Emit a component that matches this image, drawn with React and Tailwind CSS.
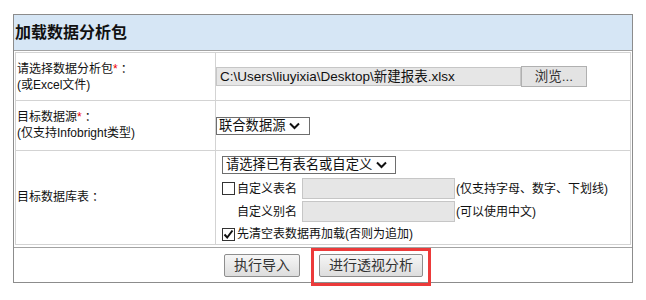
const font = "font-['Liberation_Sans','Noto_Sans_CJK_SC',sans-serif]";

function Chevron() {
  return (
    <svg width="11" height="8" viewBox="0 0 11 8" className="shrink-0 ml-[4px]">
      <path d="M1 1.5 L5.5 6 L10 1.5" fill="none" stroke="#111" strokeWidth="2" />
    </svg>
  );
}

function Checkbox({ checked }) {
  return (
    <span className="w-[13px] h-[13px] border border-[#333] bg-white flex items-center justify-center shrink-0">
      {checked && (
        <svg width="11" height="11" viewBox="0 0 11 11">
          <path d="M1.5 5.5 L4.2 8.5 L9.5 1.5" fill="none" stroke="#111" strokeWidth="2" />
        </svg>
      )}
    </span>
  );
}

function Btn({ children }) {
  return (
    <div className="h-[23px] px-[9px] flex items-center justify-center border border-[#8e8e8e] rounded-[2px] bg-gradient-to-b from-[#f6f6f6] to-[#dddddd] text-[14px] text-[#333] leading-none">
      {children}
    </div>
  );
}

export default function App() {
  return (
    <div className={`w-[646px] h-[300px] bg-white pt-[14px] pl-[13px] text-[#111] ${font}`}>
      <div className="w-[620px] border border-[#8c8c8c]">
        <div className="h-[36px] bg-[#d6e6f5] border-b border-[#a3a3a3] flex items-center pl-[1px]">
          <span className="text-[16px] font-bold leading-none text-[#111]">加载数据分析包</span>
        </div>
        <div className="px-[1px] pt-[1px] pb-[2px]">
          <div className="border border-[#d3d3d3]">
            {/* row 1 */}
            <div className="flex h-[48px] border-b border-[#d3d3d3]">
              <div className="w-[200px] border-r border-[#d3d3d3] flex flex-col justify-center pl-[1px] text-[12px] leading-[16px] pt-[1px]">
                <div>
                  请选择数据分析包<span className="text-[#e00]">*</span><span className="ml-[3px]">：</span>
                </div>
                <div>(或Excel文件)</div>
              </div>
              <div className="flex-1 flex items-center">
                <div className="w-[305px] h-[19px] bg-[#e6e6e6] border border-[#c6c6c6] flex items-center pl-[3px] text-[13.5px] leading-none text-[#111]">
                  C:\Users\liuyixia\Desktop\新建报表.xlsx
                </div>
                <div className="w-[66px] h-[21px] bg-[#e3e3e3] border border-[#b0b0b0] flex items-center justify-center text-[13.5px] leading-none text-[#333]">
                  浏览...
                </div>
              </div>
            </div>
            {/* row 2 */}
            <div className="flex h-[50px] border-b border-[#d3d3d3]">
              <div className="w-[200px] border-r border-[#d3d3d3] flex flex-col justify-center pl-[1px] text-[12px] leading-[16px] pb-[1px]">
                <div>
                  目标数据源<span className="text-[#e00]">*</span><span className="ml-[3px]">：</span>
                </div>
                <div>(仅支持Infobright类型)</div>
              </div>
              <div className="flex-1 flex items-center">
                <div className="w-[94px] h-[18px] border border-[#6e6e6e] bg-white flex items-center pl-[2px] text-[13.3px] leading-none">
                  <span>联合数据源</span>
                  <Chevron />
                </div>
              </div>
            </div>
            {/* row 3 */}
            <div className="flex h-[93px]">
              <div className="w-[200px] border-r border-[#d3d3d3] flex items-center pl-[1px] text-[12px] leading-[16px] pb-[1px]">
                目标数据库表<span className="ml-[3px]">：</span>
              </div>
              <div className="flex-1 flex flex-col pl-[6px] pt-[5px] text-[12px] leading-[16px]">
                <div className="w-[174px] h-[18px] border border-[#6e6e6e] bg-white flex items-center pl-[3px] text-[13.3px] leading-none">
                  <span>请选择已有表名或自定义</span>
                  <Chevron />
                </div>
                <div className="flex items-center mt-[4px] h-[21px]">
                  <div className="w-[80px] flex items-center">
                    <Checkbox />
                    <span className="ml-[2px]">自定义表名</span>
                  </div>
                  <div className="w-[153px] h-[21px] bg-[#e6e6e6] border border-[#c6c6c6]" />
                  <span className="ml-[1px]">(仅支持字母、数字、下划线)</span>
                </div>
                <div className="flex items-center mt-[2px] h-[21px]">
                  <div className="w-[80px] text-right pr-[5px]">自定义别名</div>
                  <div className="w-[153px] h-[21px] bg-[#e6e6e6] border border-[#c6c6c6]" />
                  <span className="ml-[1px]">(可以使用中文)</span>
                </div>
                <div className="flex items-center mt-[4px] h-[16px]">
                  <Checkbox checked />
                  <span className="ml-[2px]">先清空表数据再加载(否则为追加)</span>
                </div>
              </div>
            </div>
          </div>
        </div>
        <div className="h-[35px] border-t border-[#a3a3a3] flex items-center justify-center gap-[19px] pl-[1px]">
          <Btn>执行导入</Btn>
          <div className="relative">
            <Btn>进行透视分析</Btn>
            <div className="absolute -left-[8px] -top-[6px] w-[120px] h-[38px] border-[3px] border-[#ec3a3a]" />
          </div>
        </div>
      </div>
    </div>
  );
}
